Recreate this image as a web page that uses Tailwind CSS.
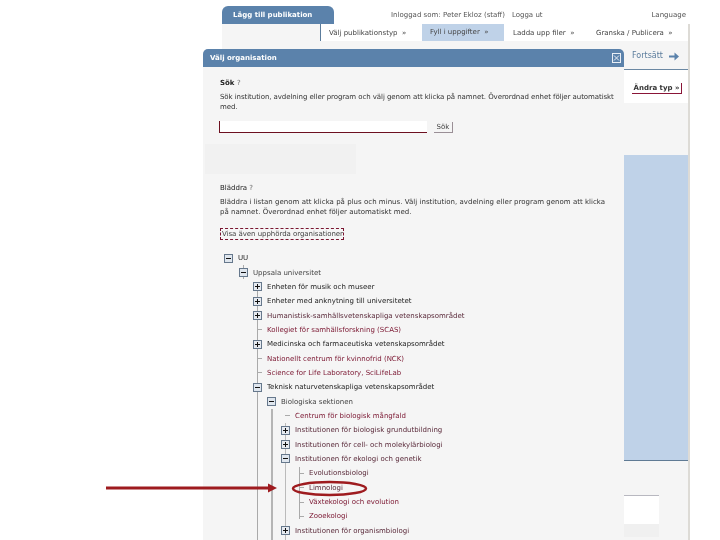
<!DOCTYPE html>
<html lang="sv">
<head>
    <meta charset="UTF-8">
    <title>Lägg till publikation</title>
    <script src="https://cdn.jsdelivr.net/npm/@tailwindcss/browser@4"></script>
</head>
<body class="bg-white font-['DejaVu_Sans',sans-serif] text-[7px] leading-[10px] text-[#333]">
<svg class="hidden">
    <symbol id="plus" viewBox="0 0 9 9"><rect x=".5" y=".5" width="8" height="8" fill="#e6eaf0" stroke="#66788c" shape-rendering="crispEdges"/><path d="M2 4h5v1H2zM4 2h1v5H4z" fill="#111" shape-rendering="crispEdges"/></symbol>
    <symbol id="minus" viewBox="0 0 9 9"><rect x=".5" y=".5" width="8" height="8" fill="#dfe6ee" stroke="#66788c" shape-rendering="crispEdges"/><path d="M2 4h5v1H2z" fill="#111" shape-rendering="crispEdges"/></symbol>
</svg>
<div class="relative w-[720px] h-[540px] overflow-hidden bg-white blur-[0.35px]">

    <!-- Page behind the dialog -->
    <div class="ml-[222px] w-[468px] h-[540px] flex flex-col pt-[6px]">
        <div class="flex h-[18px] items-center">
            <div class="w-[112px] h-[18px] bg-[#5b82ab] rounded-t-[6px] text-white font-bold pl-[11px] leading-[18px]">Lägg till publikation</div>
            <div class="ml-[57px] text-[#555]">Inloggad som: Peter Ekloz (staff)</div>
            <div class="ml-[7px] text-[#555]">Logga ut</div>
            <div class="ml-auto mr-[4px] text-[#555]">Language</div>
        </div>
        <div class="flex flex-col flex-1 bg-[#f5f5f5] border-r-2 border-[#dddbd6]">
            <div class="flex h-[17px] items-center bg-white ml-[98px] border-l border-[#5b7c9c] text-[#444]">
                <div class="w-[101px] pl-[8px]">Välj publikationstyp &nbsp;»</div>
                <div class="w-[82px] h-[17px] leading-[17px] bg-[#bfd2e8] pl-[8px]">Fyll i uppgifter &nbsp;»</div>
                <div class="w-[83px] pl-[9px]">Ladda upp filer &nbsp;»</div>
                <div class="pl-[9px]">Granska / Publicera &nbsp;»</div>
            </div>
            <div class="flex items-center justify-end h-[29px] border-b border-[#6b88a3] pr-[9px] pt-[2px] text-[#5b7c9c] text-[8px] font-medium">
                Fortsätt
                <svg class="ml-[6px]" width="10" height="9" viewBox="0 0 10 9"><path d="M0 3.500h5.500V0.500L10 4.500 5.500 8.500V5.500H0z" fill="#5b82ab"/></svg>
            </div>
            <div class="h-[33px] bg-white pt-[13px] pl-[410px]">
                <div class="w-[50px] h-[11px] border-r border-b border-[#8a1538] text-[#333] font-bold text-center leading-[10px]">Ändra typ »</div>
            </div>
            <div class="h-[52px]"></div>
            <div class="h-[306px] bg-[#bfd2e8] border-b border-[#5f7a94]"></div>
            <div class="h-[34px]"></div>
            <div class="h-[29px] w-[437px] bg-white border-t border-[#b8b8c0]"></div>
            <div class="h-[13px] w-[437px] bg-[#f0f0f0]"></div>
        </div>
    </div>

    <!-- Dialog -->
    <div class="absolute left-[203px] top-[49px] w-[421px] h-[491px] bg-[#f5f5f5] rounded-t-[5px] overflow-hidden">
        <div class="flex items-center justify-between h-[18px] bg-[#5b82ab] pl-[7px] pr-[3px] text-white font-bold">
            <span>Välj organisation</span>
            <svg width="9" height="10" viewBox="0 0 9 10"><rect x=".5" y=".5" width="8" height="9" fill="none" stroke="#e8eef5"/><path d="M2 2.500l5 5M7 2.500l-5 5" stroke="#e8eef5"/></svg>
        </div>
        <div class="pl-[17px] pr-[4px]">
            <div class="mt-[11px] h-[10px] font-bold text-[#222]">Sök <span class="font-normal text-[#666]">?</span></div>
            <p class="mt-[4px] text-[#333] tracking-[-0.07px]">Sök institution, avdelning eller program och välj genom att klicka på namnet. Överordnad enhet följer automatiskt med.</p>
            <div class="flex items-center mt-[9px] -ml-[1px] h-[12px]">
                <div class="w-[208px] h-[12px] bg-white border-l border-b border-[#6d1020]"></div>
                <button class="ml-[7px] w-[19px] h-[11px] bg-[#f5f5f5] border-r border-b border-[#9a8f96] text-[#444] text-[7px] leading-[10px]">Sök</button>
            </div>
        </div>
        <div class="mt-[11px] ml-[2px] w-[151px] h-[30px] bg-[#f1f1f1]"></div>
        <div class="pl-[17px] pr-[11px]">
            <div class="mt-[9px] h-[10px] text-[#222]">Bläddra <span class="text-[#666]">?</span></div>
            <p class="mt-[4px] text-[#333] tracking-[0.02px]">Bläddra i listan genom att klicka på plus och minus. Välj institution, avdelning eller program genom att klicka på namnet. Överordnad enhet följer automatiskt med.</p>
            <div class="mt-[11px] w-[124px] h-[12px] border border-dashed border-[#7a1530] pl-[1px] text-[#444] leading-[10px] whitespace-nowrap tracking-[-0.05px]">Visa även upphörda organisationer</div>
        </div>

        <!-- Tree -->
        <div class="relative mt-[11px] text-[#222]">
            <div class="absolute left-[40px] top-[14px] h-[14px] w-px bg-[#aaa]"></div>
            <div class="absolute left-[54px] top-[36px] h-[300px] w-px bg-[#aaa]"></div>
            <div class="absolute left-[68px] top-[158px] h-[180px] w-[2px] bg-[#b5b5b5]"></div>
            <div class="absolute left-[82px] top-[172px] h-[160px] w-px bg-[#bbb]"></div>
            <div class="absolute left-[96px] top-[216px] h-[52px] w-px bg-[#aaa]"></div>

            <div class="relative flex items-center gap-[5px] h-[14.35px] pl-[21px]"><svg width="9" height="9"><use href="#minus"/></svg><span>UU</span></div>
            <div class="relative flex items-center gap-[5px] h-[14.35px] pl-[36px] text-[#444]"><svg width="9" height="9"><use href="#minus"/></svg><span>Uppsala universitet</span></div>
            <div class="relative flex items-center gap-[5px] h-[14.35px] pl-[50px]"><svg width="9" height="9"><use href="#plus"/></svg><span>Enheten för musik och museer</span></div>
            <div class="relative flex items-center gap-[5px] h-[14.35px] pl-[50px]"><svg width="9" height="9"><use href="#plus"/></svg><span>Enheter med anknytning till universitetet</span></div>
            <div class="relative flex items-center gap-[5px] h-[14.35px] pl-[50px] text-[#5a2a3a]"><svg width="9" height="9"><use href="#plus"/></svg><span>Humanistisk-samhällsvetenskapliga vetenskapsområdet</span></div>
            <div class="relative flex items-center gap-[5px] h-[14.35px] pl-[50px] text-[#7a1530]"><div class="ml-[4px] w-[5px] h-px bg-[#aaa]"></div><span>Kollegiet för samhällsforskning (SCAS)</span></div>
            <div class="relative flex items-center gap-[5px] h-[14.35px] pl-[50px]"><svg width="9" height="9"><use href="#plus"/></svg><span>Medicinska och farmaceutiska vetenskapsområdet</span></div>
            <div class="relative flex items-center gap-[5px] h-[14.35px] pl-[50px] text-[#7a1530]"><div class="ml-[4px] w-[5px] h-px bg-[#aaa]"></div><span>Nationellt centrum för kvinnofrid (NCK)</span></div>
            <div class="relative flex items-center gap-[5px] h-[14.35px] pl-[50px] text-[#7a1530]"><div class="ml-[4px] w-[5px] h-px bg-[#aaa]"></div><span>Science for Life Laboratory, SciLifeLab</span></div>
            <div class="relative flex items-center gap-[5px] h-[14.35px] pl-[50px]"><svg width="9" height="9"><use href="#minus"/></svg><span>Teknisk naturvetenskapliga vetenskapsområdet</span></div>
            <div class="relative flex items-center gap-[5px] h-[14.35px] pl-[64px] text-[#444]"><svg width="9" height="9"><use href="#minus"/></svg><span>Biologiska sektionen</span></div>
            <div class="relative flex items-center gap-[5px] h-[14.35px] pl-[78px] text-[#7a1530]"><div class="ml-[4px] w-[5px] h-px bg-[#aaa]"></div><span>Centrum för biologisk mångfald</span></div>
            <div class="relative flex items-center gap-[5px] h-[14.35px] pl-[78px] text-[#5a2a3a]"><svg width="9" height="9"><use href="#plus"/></svg><span>Institutionen för biologisk grundutbildning</span></div>
            <div class="relative flex items-center gap-[5px] h-[14.35px] pl-[78px] text-[#5a2a3a]"><svg width="9" height="9"><use href="#plus"/></svg><span>Institutionen för cell- och molekylärbiologi</span></div>
            <div class="relative flex items-center gap-[5px] h-[14.35px] pl-[78px] text-[#5a2a3a]"><svg width="9" height="9"><use href="#minus"/></svg><span>Institutionen för ekologi och genetik</span></div>
            <div class="relative flex items-center gap-[5px] h-[14.35px] pl-[92px] text-[#5a2a3a]"><div class="ml-[4px] w-[5px] h-px bg-[#aaa]"></div><span>Evolutionsbiologi</span></div>
            <div class="relative flex items-center gap-[5px] h-[14.35px] pl-[92px] text-[#5a2a3a]"><div class="ml-[4px] w-[5px] h-px bg-[#aaa]"></div><span>Limnologi</span></div>
            <div class="relative flex items-center gap-[5px] h-[14.35px] pl-[92px] text-[#7a1530]"><div class="ml-[4px] w-[5px] h-px bg-[#aaa]"></div><span>Växtekologi och evolution</span></div>
            <div class="relative flex items-center gap-[5px] h-[14.35px] pl-[92px] text-[#7a1530]"><div class="ml-[4px] w-[5px] h-px bg-[#aaa]"></div><span>Zooekologi</span></div>
            <div class="relative flex items-center gap-[5px] h-[14.35px] pl-[78px] text-[#5a2a3a]"><svg width="9" height="9"><use href="#plus"/></svg><span>Institutionen för organismbiologi</span></div>
        </div>
    </div>

    <!-- Annotation drawn over the screenshot -->
    <svg class="absolute left-0 top-0" width="720" height="540" viewBox="0 0 720 540" fill="none">
        <path d="M106 488H270" stroke="#9e1b1f" stroke-width="3"/>
        <path d="M268 483.500L277 488L268 492.500z" fill="#9e1b1f"/>
        <ellipse cx="329.500" cy="488.500" rx="36.500" ry="6.500" stroke="#9e1b1f" stroke-width="2.500"/>
    </svg>
</div>
</body>
</html>
